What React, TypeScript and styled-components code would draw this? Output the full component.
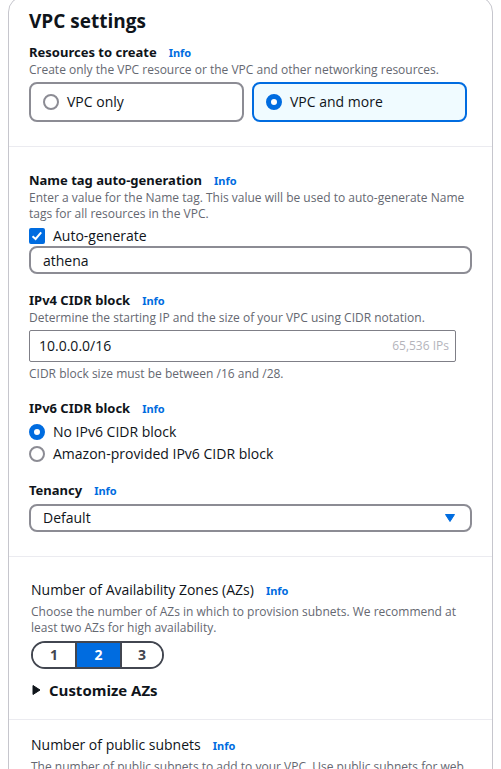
import React, { useState } from 'react';
import styled, { createGlobalStyle } from 'styled-components';

const ink = '#0f141a';
const muted = '#656871';
const blue = '#006ce0';
const outline = '#8c8c94';

const GlobalStyle = createGlobalStyle`
  *, *::before, *::after { box-sizing: border-box; }
  body {
    margin: 0;
    background: #fff;
    color: ${ink};
    font-family: "Open Sans", "Noto Sans", sans-serif;
    font-size: 14px;
    line-height: 20px;
  }
  input, select, button { font: inherit; color: inherit; margin: 0; }
`;

const Page = styled.main`
  height: 100vh;
  overflow: hidden;
  padding: 0 8px;
`;

const Card = styled.form`
  margin-top: -4px;
  min-height: calc(100vh + 40px);
  border: 1px solid #c6c6cd;
  border-radius: 16px;
`;

const Section = styled.section<{ $inset?: boolean; $tight?: boolean }>`
  padding: ${(p) => (p.$tight ? 15 : 23)}px 20px ${(p) => (p.$inset ? 16 : 24)}px ${(p) => (p.$inset ? 22 : 20)}px;
  border-top: 1px solid #ebebf0;

  &:first-child {
    border-top: 0;
    padding-top: 11px;
  }
`;

const Title = styled.h2`
  margin: 0 0 8px;
  font-size: 19px;
  line-height: 26px;
  font-weight: 700;
`;

const Group = styled.fieldset`
  margin: 0;
  padding: 0;
  border: 0;
  min-width: 0;

  & + & { margin-top: 16px; }
`;

const Heading = styled.div<{ $plain?: boolean }>`
  display: flex;
  align-items: baseline;
  gap: 12px;
  height: 20px;
  font-family: ${(p) => (p.$plain ? '"Open Sans"' : '"Noto Sans"')}, sans-serif;
  font-size: ${(p) => (p.$plain ? 14 : 13)}px;
  font-weight: ${(p) => (p.$plain ? 400 : 700)};
`;

const Info = styled.a`
  color: ${blue};
  font-family: "Noto Sans", sans-serif;
  font-size: 11px;
  font-weight: 700;
  text-decoration: none;
`;

const Hint = styled.p<{ $spaced?: boolean }>`
  margin: ${(p) => (p.$spaced ? 4 : 0)}px 0 0;
  color: ${muted};
  font-size: 12px;
  line-height: 16px;
`;

const Tiles = styled.div`
  display: grid;
  grid-template-columns: 1fr 1fr;
  gap: 8px;
  margin: 4px 5px 0 0;
`;

const Tile = styled.label`
  display: flex;
  align-items: center;
  gap: 8px;
  height: 40px;
  padding: 0 12px;
  border: 2px solid ${outline};
  border-radius: 8px;

  &:has(input:checked) {
    border-color: ${blue};
    background: #f0fbff;
  }
`;

const Radio = styled.input.attrs({ type: 'radio' })`
  appearance: none;
  flex: none;
  width: 16px;
  height: 16px;
  border: 2px solid ${outline};
  border-radius: 50%;
  background: #fff;

  &:checked { border: 5px solid ${blue}; }
`;

const Choices = styled.div`
  display: grid;
  gap: 2px;
  margin-top: 4px;
`;

const Choice = styled.label`
  display: flex;
  align-items: center;
  gap: 8px;
  height: 20px;
`;

const CheckBox = styled.span`
  display: grid;
  width: 16px;
  height: 16px;

  > * { grid-area: 1 / 1; }
  svg { pointer-events: none; }
`;

const Check = styled.input.attrs({ type: 'checkbox' })`
  appearance: none;
  width: 16px;
  height: 16px;
  border: 2px solid ${outline};
  border-radius: 2px;

  &:checked {
    border-color: ${blue};
    background: ${blue};
  }
`;

const TextBox = styled.input`
  display: block;
  width: 100%;
  height: 28px;
  padding: 0 12px;
  border: 2px solid ${outline};
  border-radius: 8px;
  background: #fff;
`;

const CidrBox = styled.div`
  display: flex;
  align-items: center;
  height: 32px;
  margin: 4px 16px 0 0;
  padding: 0 6px 0 9px;
  border: 1px solid #7f7f87;
  border-radius: 2px;
`;

const CidrInput = styled.input`
  flex: 1;
  min-width: 0;
  padding: 0;
  border: 0;
  outline: 0;
  background: transparent;
`;

const Count = styled.output`
  color: #b4b4bb;
  font-size: 12px;
`;

const SelectBox = styled.div`
  display: grid;
  align-items: center;
  margin-top: 4px;

  > * { grid-area: 1 / 1; }
  svg {
    justify-self: end;
    margin-right: 16px;
    pointer-events: none;
  }
`;

const Select = styled.select`
  appearance: none;
  width: 100%;
  height: 28px;
  padding: 0 36px 0 12px;
  border: 2px solid ${outline};
  border-radius: 8px;
  background: #fff;
`;

const Segments = styled.div`
  display: inline-grid;
  grid-template-columns: 42px 47px 40px;
  height: 28px;
  margin-top: 5px;
  border: 2px solid #424650;
  border-radius: 14px;
  overflow: hidden;
  vertical-align: top;
`;

const Segment = styled.button<{ $on: boolean }>`
  padding: 0;
  border: 0 solid #424650;
  background: ${(p) => (p.$on ? blue : '#fff')};
  color: ${(p) => (p.$on ? '#fff' : '#424650')};
  font-weight: 700;

  &:nth-child(2) { border-width: 0 2px; }
`;

const Expander = styled.button`
  display: flex;
  align-items: center;
  gap: 8px;
  margin-top: 9px;
  margin-bottom: 1px;
  padding: 0;
  border: 0;
  background: none;
  font-size: 15px;
  line-height: 24px;
  font-weight: 700;
`;

type FieldHeadingProps = { text: string; htmlFor?: string; plain?: boolean };

function FieldHeading({ text, htmlFor, plain }: FieldHeadingProps) {
  return (
    <Heading $plain={plain}>
      {htmlFor ? <label htmlFor={htmlFor}>{text}</label> : <span>{text}</span>}
      <Info href="#info">Info</Info>
    </Heading>
  );
}

export default function App() {
  const [scope, setScope] = useState('more');
  const [auto, setAuto] = useState(true);
  const [ipv6, setIpv6] = useState('none');
  const [zones, setZones] = useState(2);

  return (
    <Page>
      <GlobalStyle />
      <Card>
        <Section>
          <Title>VPC settings</Title>
          <Group aria-label="Resources to create">
            <FieldHeading text="Resources to create" />
            <Hint>Create only the VPC resource or the VPC and other networking resources.</Hint>
            <Tiles>
              <Tile>
                <Radio name="scope" checked={scope === 'only'} onChange={() => setScope('only')} />
                VPC only
              </Tile>
              <Tile>
                <Radio name="scope" checked={scope === 'more'} onChange={() => setScope('more')} />
                VPC and more
              </Tile>
            </Tiles>
          </Group>
        </Section>

        <Section>
          <Group>
            <FieldHeading text="Name tag auto-generation" htmlFor="name-tag" />
            <Hint>
              Enter a value for the Name tag. This value will be used to auto-generate Name tags for all resources in
              the VPC.
            </Hint>
            <Choices>
              <Choice>
                <CheckBox>
                  <Check checked={auto} onChange={() => setAuto(!auto)} />
                  <svg width="16" height="16" viewBox="0 0 16 16" fill="none" stroke="#fff" strokeWidth="2">
                    <path d="M3.5 8.2 6.6 11 12.2 4.4" />
                  </svg>
                </CheckBox>
                Auto-generate
              </Choice>
            </Choices>
            <TextBox id="name-tag" defaultValue="athena" />
          </Group>

          <Group>
            <FieldHeading text="IPv4 CIDR block" htmlFor="cidr" />
            <Hint>Determine the starting IP and the size of your VPC using CIDR notation.</Hint>
            <CidrBox>
              <CidrInput id="cidr" defaultValue="10.0.0.0/16" />
              <Count htmlFor="cidr">65,536 IPs</Count>
            </CidrBox>
            <Hint $spaced>CIDR block size must be between /16 and /28.</Hint>
          </Group>

          <Group aria-label="IPv6 CIDR block">
            <FieldHeading text="IPv6 CIDR block" />
            <Choices>
              <Choice>
                <Radio name="ipv6" checked={ipv6 === 'none'} onChange={() => setIpv6('none')} />
                No IPv6 CIDR block
              </Choice>
              <Choice>
                <Radio name="ipv6" checked={ipv6 === 'amazon'} onChange={() => setIpv6('amazon')} />
                Amazon-provided IPv6 CIDR block
              </Choice>
            </Choices>
          </Group>

          <Group>
            <FieldHeading text="Tenancy" htmlFor="tenancy" />
            <SelectBox>
              <Select id="tenancy">
                <option>Default</option>
              </Select>
              <svg width="12" height="10" viewBox="0 0 12 10" fill={blue} stroke={blue} strokeLinejoin="round">
                <path d="M1.5 1.5h9L6 8.5z" />
              </svg>
            </SelectBox>
          </Group>
        </Section>

        <Section $inset>
          <Group aria-label="Number of Availability Zones">
            <FieldHeading plain text="Number of Availability Zones (AZs)" />
            <Hint $spaced>
              Choose the number of AZs in which to provision subnets. We recommend at least two AZs for high
              availability.
            </Hint>
            <Segments>
              {[1, 2, 3].map((n) => (
                <Segment key={n} type="button" $on={zones === n} aria-pressed={zones === n} onClick={() => setZones(n)}>
                  {n}
                </Segment>
              ))}
            </Segments>
            <Expander type="button" aria-expanded={false}>
              <svg width="10" height="12" viewBox="0 0 10 12" fill={ink} stroke={ink} strokeLinejoin="round">
                <path d="M2 1.5v9L9 6z" />
              </svg>
              Customize AZs
            </Expander>
          </Group>
        </Section>

        <Section $inset $tight>
          <Group aria-label="Number of public subnets">
            <FieldHeading plain text="Number of public subnets" />
            <Hint $spaced>The number of public subnets to add to your VPC. Use public subnets for web</Hint>
          </Group>
        </Section>
      </Card>
    </Page>
  );
}
